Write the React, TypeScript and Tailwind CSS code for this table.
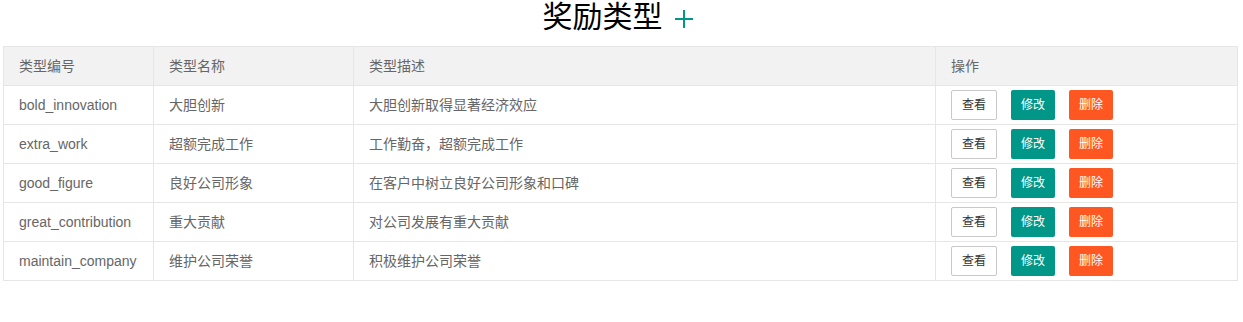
import React from "react";

const rows = [
  ["bold_innovation", "大胆创新", "大胆创新取得显著经济效应"],
  ["extra_work", "超额完成工作", "工作勤奋，超额完成工作"],
  ["good_figure", "良好公司形象", "在客户中树立良好公司形象和口碑"],
  ["great_contribution", "重大贡献", "对公司发展有重大贡献"],
  ["maintain_company", "维护公司荣誉", "积极维护公司荣誉"],
];

const font = { fontFamily: '"Liberation Sans", "Noto Sans CJK SC", sans-serif' };

export default function App() {
  return (
    <div className="w-[1243px] h-[322px] bg-white" style={font}>
      <div className="h-[46px] flex items-start justify-center">
        <h1 className="text-[30px] leading-[34px] text-black font-normal flex items-center pr-[8px]">
          <span>奖励类型</span>
          <svg width="18" height="18" viewBox="0 0 18 18" className="ml-[12px] mt-[4px]">
            <rect x="8" y="0" width="2" height="18" fill="#009688" />
            <rect x="0" y="8" width="18" height="2" fill="#009688" />
          </svg>
        </h1>
      </div>
      <div className="px-[3px]">
        <table className="border-collapse text-[14px] text-[#666] w-[1234px] table-fixed">
          <colgroup>
            <col className="w-[150px]" />
            <col className="w-[200px]" />
            <col className="w-[582px]" />
            <col className="w-[302px]" />
          </colgroup>
          <thead>
            <tr className="bg-[#f2f2f2]">
              {["类型编号", "类型名称", "类型描述", "操作"].map((h) => (
                <th
                  key={h}
                  className="border border-[#e6e6e6] px-[15px] py-[9px] leading-[20px] h-[39px] text-left font-normal"
                >
                  {h}
                </th>
              ))}
            </tr>
          </thead>
          <tbody>
            {rows.map((r) => (
              <tr key={r[0]}>
                <td className="border border-[#e6e6e6] px-[15px] py-[9px] leading-[20px] h-[39px]">{r[0]}</td>
                <td className="border border-[#e6e6e6] px-[15px] py-[9px] leading-[20px] h-[39px]">{r[1]}</td>
                <td className="border border-[#e6e6e6] px-[15px] py-[9px] leading-[20px] h-[39px]">{r[2]}</td>
                <td className="border border-[#e6e6e6] px-[15px] py-0 h-[39px]">
                  <div className="flex items-center gap-[14px]">
                    <button className="h-[30px] w-[46px] border border-[#c9c9c9] rounded-[2px] bg-white text-[#333] text-[12px] leading-[28px]">
                      查看
                    </button>
                    <button className="h-[30px] w-[44px] rounded-[2px] bg-[#009688] text-white text-[12px] leading-[30px]">
                      修改
                    </button>
                    <button className="h-[30px] w-[44px] rounded-[2px] bg-[#ff5722] text-white text-[12px] leading-[30px]">
                      删除
                    </button>
                  </div>
                </td>
              </tr>
            ))}
          </tbody>
        </table>
      </div>
    </div>
  );
}
